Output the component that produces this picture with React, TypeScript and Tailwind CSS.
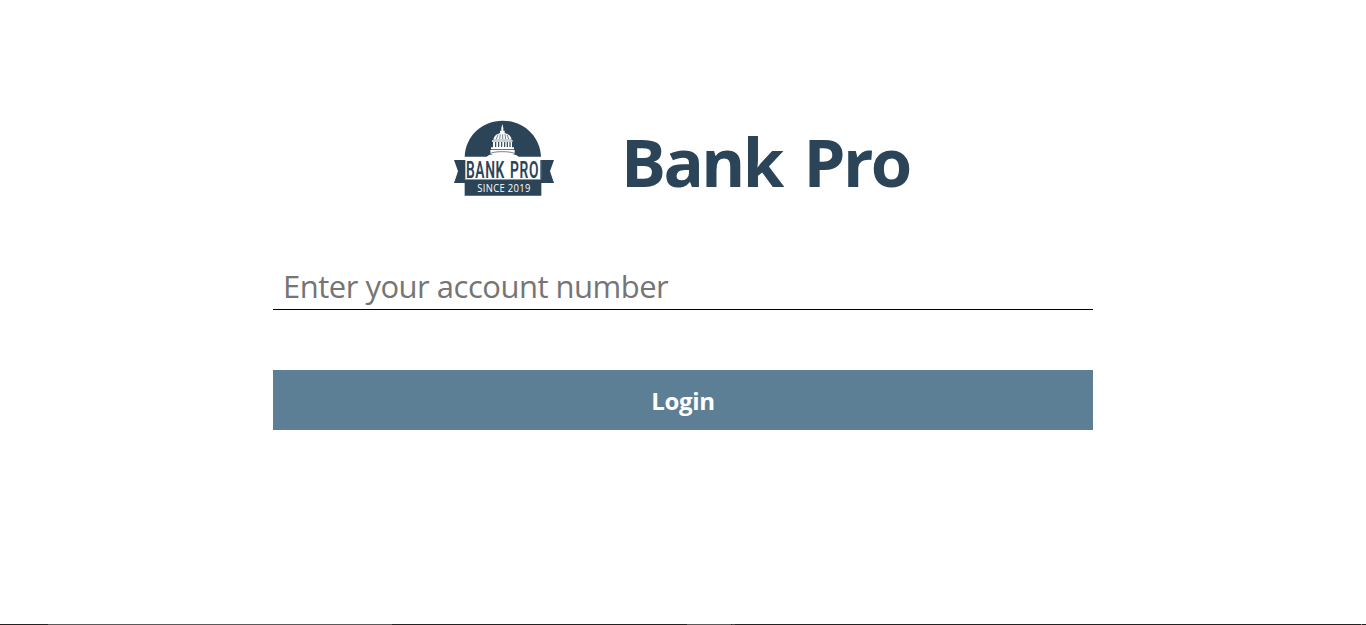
function BankLogo() {
  return (
    <svg className="h-[88px] w-[112px]" viewBox="0 0 336 264" role="img" aria-label="Bank Pro, since 2019">
      {/* sky dome */}
      <path d="M50 128C52 66 102 20 164 20s112 46 115 108Z" fill="#2b4457" />
      {/* capitol */}
      <g fill="#fff">
        <path d="M163 30l3 12v8h4v10h-14V50h4v-8Z" />
        <path d="M136 77c2-12 12-20 28-20s25 8 27 20Z" />
        <path d="M132 79h62v4h-62ZM135 84h57v16h-57ZM129 100h69v6h-69ZM127 108h73v12h-73Z" />
        <path d="M116 129c5-8 17-10 47-10s43 2 49 10Z" />
      </g>
      <g stroke="#2b4457" fill="none">
        <path d="M145 75l5-13M155 75l2-14M164 75V61M173 75l-2-14M182 75l-5-13" strokeWidth="2" />
        <path d="M143 84v15M152 84v15M161 84v15M170 84v15M178 84v15M186 84v15" strokeWidth="3.5" />
        <path d="M120 121c12-6 24-8 43-8s32 2 44 8" strokeWidth="2" />
      </g>
      {/* ribbon tails and lower plate */}
      <path d="M18 138h32v58h230v-58h38l-12 34 12 35h-38v38H50v-38H18l12-35Z" fill="#2b4457" />
      <path d="M50 130h228v66H50Z" fill="#fff" />
      <path d="M50 138v58M279 138v58" stroke="#2b4457" strokeWidth="4" />
      <text
        x="54"
        y="192"
        textLength="219"
        lengthAdjust="spacingAndGlyphs"
        fill="#2b4457"
        className="font-['Roboto','Open_Sans',sans-serif] text-[69px] font-semibold tracking-[3px] [word-spacing:6px]"
      >
        BANK PRO
      </text>
      <text
        x="88"
        y="233"
        textLength="160"
        lengthAdjust="spacingAndGlyphs"
        fill="#fff"
        className="font-['Open_Sans','Noto_Sans',sans-serif] text-[31px] tracking-[1px]"
      >
        SINCE 2019
      </text>
    </svg>
  );
}

export default function App() {
  return (
    <div className="flex h-[625px] w-full flex-col items-center justify-between bg-white font-['Open_Sans','Noto_Sans',sans-serif]">
      <main className="flex w-[820px] flex-col pt-[114px]">
        <header className="flex h-[88px] items-center pl-[175px]">
          <BankLogo />
          <h1 className="ml-[61px] pt-[6px] text-[67px] leading-[88px] font-bold tracking-[-2.6px] whitespace-nowrap text-[#2b4457] [word-spacing:7px]">
            Bank Pro
          </h1>
        </header>
        <form className="flex flex-col" onSubmit={(e) => e.preventDefault()}>
          <input
            type="text"
            aria-label="Account number"
            placeholder="Enter your account number"
            className="mt-[60px] h-12 w-full border-b border-black bg-transparent px-2.5 text-[31px] tracking-[-0.5px] outline-none placeholder:text-[#757575]"
          />
          <button
            type="submit"
            className="mt-[60px] h-[60px] w-full bg-[#5d7f95] pt-[2px] text-[24px] font-bold tracking-[-0.3px] text-white"
          >
            Login
          </button>
        </form>
      </main>
      <div className="flex h-px w-full bg-[#222222]">
        <div className="ml-[48px] h-px w-[344px] bg-[#5a5a5a]" />
        <div className="ml-[295px] h-px w-[44px] bg-[#5a5a5a]" />
        <div className="ml-px h-px w-[3px] bg-[#444444]" />
        <div className="ml-[626px] h-px w-px bg-[#888888]" />
      </div>
    </div>
  );
}
